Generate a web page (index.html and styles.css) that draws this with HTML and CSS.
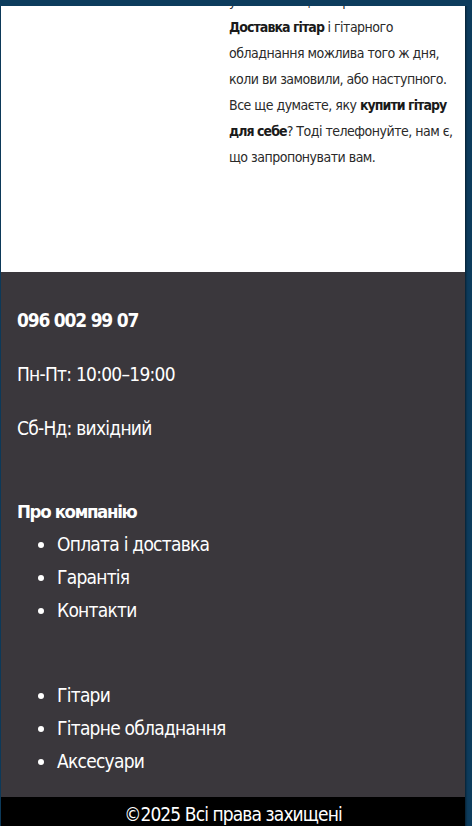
FILE: index.html
```html
<!DOCTYPE html>
<html lang="uk">
<head>
<meta charset="utf-8">
<title>Гітари</title>
<link rel="stylesheet" href="styles.css">
</head>
<body>
<div class="topbar"></div>
<div class="page">
  <section class="intro">
    <div class="intro-side"></div>
    <div class="intro-text">
      <p>у нас є все що потрібно. Ми<br><b>Доставка гітар</b> і гітарного<br>обладнання можлива того ж дня,<br>коли ви замовили, або наступного.<br>Все ще думаєте, яку <b>купити гітару</b><br><b>для себе</b>? Тоді телефонуйте, нам є,<br>що запропонувати вам.</p>
    </div>
  </section>
  <footer class="footer">
    <div class="contacts">
      <p class="phone">096 002 99 07</p>
      <p>Пн-Пт: 10:00–19:00</p>
      <p>Сб-Нд: вихідний</p>
    </div>
    <div class="col col-first">
      <h4 class="col-title">Про компанію</h4>
      <ul class="links">
        <li>Оплата і доставка</li>
        <li>Гарантія</li>
        <li>Контакти</li>
      </ul>
    </div>
    <div class="col col-second">
      <ul class="links">
        <li>Гітари</li>
        <li>Гітарне обладнання</li>
        <li>Аксесуари</li>
      </ul>
    </div>
  </footer>
  <div class="copy">©2025 Всі права захищені</div>
</div>
</body>
</html>
```
FILE: styles.css
```css
html, body {
  margin: 0;
  padding: 0;
}
body {
  background: #0d3c5d;
  font-family: "DejaVu Sans Condensed", "DejaVu Sans", sans-serif;
  font-stretch: condensed;
  overflow: hidden;
}
.topbar {
  position: fixed;
  top: 0;
  left: 0;
  right: 0;
  height: 6px;
  background: #0d3c5d;
  z-index: 5;
}
.page {
  margin: 0 7px 0 1px;
  box-shadow: 1px 0 2px rgba(0,0,0,0.5);
}
.intro {
  background: #fff;
  display: flex;
  overflow: hidden;
  height: 272px;
}
.intro-side {
  width: 228px;
  flex: none;
}
.intro-text {
  flex: 1;
  white-space: nowrap;
}
.intro-text p {
  margin: -12px 0 0;
  font-size: 14px;
  letter-spacing: -0.5px;
  line-height: 26px;
  color: #2a2a2a;
}
.intro-text b {
  color: #1a1a1a;
  font-size: 14px;
  letter-spacing: -0.95px;
}
.footer {
  background: #3a373c;
  color: #fff;
  padding: 11px 16px 19px;
  font-size: 19px;
  letter-spacing: -0.75px;
}
.contacts p {
  margin: 20px 0;
  line-height: 34px;
}
.contacts .phone {
  font-weight: bold;
  letter-spacing: -1.2px;
}
.col-first {
  margin-top: 50px;
}
.col-second {
  margin-top: 52px;
}
.col-title {
  margin: 0;
  font-size: 18.5px;
  letter-spacing: -1.35px;
  line-height: 33px;
  font-weight: bold;
}
.links {
  margin: 0;
  padding-left: 40px;
  line-height: 33px;
}
.copy {
  background: #000;
  color: #fff;
  text-align: center;
  font-size: 19px;
  letter-spacing: -0.9px;
  line-height: 34px;
  height: 40px;
}
```
